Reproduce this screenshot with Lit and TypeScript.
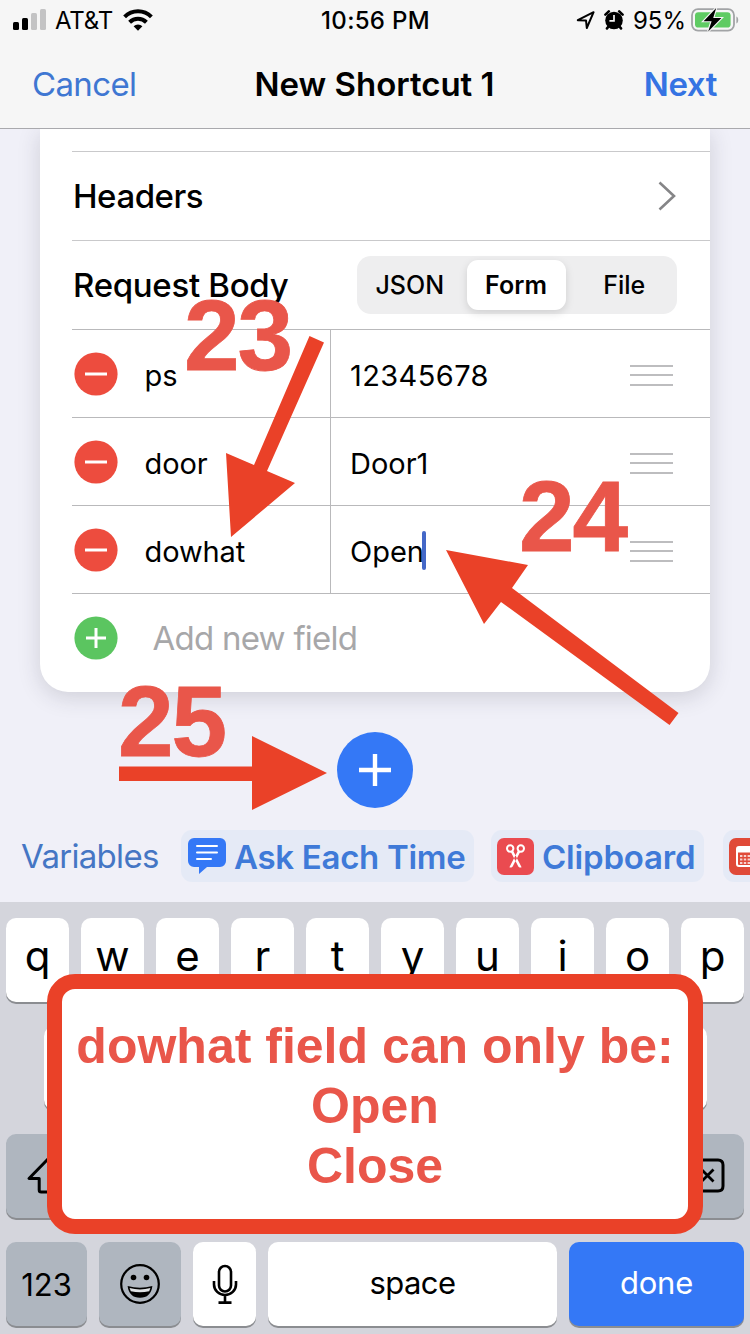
import { LitElement, html, css, svg } from "lit";
import { customElement } from "lit/decorators.js";
import { classMap } from "lit/directives/class-map.js";

const sans = css`Inter, "Liberation Sans", sans-serif`;

@customElement("status-bar")
class StatusBar extends LitElement {
  static styles = css`
    :host { display: grid; grid-template-columns: 1fr auto 1fr; height: 40px; align-items: center; box-sizing: border-box; padding: 0 11px 0 12px; font: 400 24px/40px ${sans}; color: #000; }
    .side { display: flex; align-items: center; }
    .right { justify-content: flex-end; }
    .signal { width: 35px; height: 22px; margin-right: 8px; }
    .carrier { padding-top: 2px; line-height: 38px; letter-spacing: -0.2px; }
    .wifi { margin-left: 10px; }
    .time { font-weight: 550; letter-spacing: 0.3px; padding-top: 2px; line-height: 38px; }
    .arrow { margin-right: 8px; }
    .alarm { margin-right: 9px; }
    .pct { padding-top: 2px; line-height: 38px; }
    .battery { margin-left: 5px; }
  `;
  render() {
    return html`
      <div class="side">
        <svg class="signal" viewBox="0 0 35 22">
          <rect x="1" y="13" width="6" height="8" rx="1.5" />
          <rect x="10" y="9" width="6" height="12" rx="1.5" />
          <rect x="19" y="4" width="6" height="17" rx="1.5" fill="#c3c3c4" />
          <rect x="28" y="0" width="6" height="21" rx="1.5" fill="#c3c3c4" />
        </svg>
        <span class="carrier">AT&amp;T</span>
        <svg class="wifi" width="30" height="22" viewBox="0 0 30 22">
          <g fill="none" stroke="#000" stroke-width="4">
            <path d="M1.6 7.8a19 19 0 0 1 26.8 0" />
            <path d="M6.6 13.2a12 12 0 0 1 16.8 0" />
          </g>
          <path d="M15 21.8l-4.4-4.6a6.4 6.4 0 0 1 8.8 0z" />
        </svg>
      </div>
      <span class="time">10:56 PM</span>
      <div class="side right">
        <svg class="arrow" width="20" height="20" viewBox="0 0 20 20">
          <path d="M1.8 10.2L17.6 2.2 10.8 18 10 10.4z" fill="none" stroke="#000" stroke-width="2" stroke-linejoin="round" />
        </svg>
        <svg class="alarm" width="20" height="20" viewBox="0 0 20 20">
          <circle cx="10" cy="10.5" r="8.8" />
          <path d="M1.4 4.6L4.8 1.4M18.600 4.600L15.200 1.400M3 18.400l2-2.400M17 18.400l-2-2.400" stroke="#000" stroke-width="2.6" stroke-linecap="round" />
          <path d="M10 5v5.800H5.400" fill="none" stroke="#f6f6f6" stroke-width="1.700" />
        </svg>
        <span class="pct">95%</span>
        <svg class="battery" width="48" height="24" viewBox="0 0 48 24">
          <rect x="1" y="1.2" width="42" height="21.4" rx="6" fill="none" stroke="#a2a4a6" stroke-width="1.8" />
          <rect x="4" y="4.2" width="35.6" height="15.4" rx="3.4" fill="#5fcb63" />
          <path d="M45.4 8.4c2.4.8 2.4 6.2 0 7z" fill="#a2a4a6" />
          <path d="M25.2 0L12.6 13.2h8l-3.4 10.2L30.4 10h-8.2z" stroke="#f6f6f6" stroke-width="2.2" paint-order="stroke" />
        </svg>
      </div>
    `;
  }
}

@customElement("nav-bar")
class NavBar extends LitElement {
  static styles = css`
    :host { display: grid; grid-template-columns: 1fr auto 1fr; height: 88px; align-items: center; padding: 0 33px 0 32px; font: 400 33px/40px ${sans}; box-sizing: border-box; }
    .cancel { color: #3f77d2; letter-spacing: -0.65px; }
    .title { font-weight: 600; letter-spacing: -0.02px; color: #000; }
    .next { font-weight: 600; color: #3573e3; justify-self: end; letter-spacing: -0.4px; }
  `;
  render() {
    return html`<span class="cancel">Cancel</span><span class="title">New Shortcut 1</span><span class="next">Next</span>`;
  }
}

@customElement("request-card")
class RequestCard extends LitElement {
  static styles = css`
    :host { display: block; margin: 0 40px; height: 563px; box-sizing: border-box; background: #fff; border-radius: 0 0 28px 28px; box-shadow: 0 5px 22px rgba(40, 40, 60, 0.17); padding: 22px 0 0 32px; font: 400 29px/36px ${sans}; color: #000; }
    .row { display: flex; align-items: center; box-sizing: border-box; border-top: 1px solid #c9c9cb; height: 89px; }
    .label { font-weight: 500; font-size: 33px; flex: 1; letter-spacing: -0.45px; padding-left: 1px; }
    .body-label { letter-spacing: -0.3px; }
    .chevron { margin-right: 33px; }
    .segments { display: flex; align-items: center; width: 320px; height: 58px; background: #eeeeef; border-radius: 14px; margin-right: 33px; font-size: 25px; font-weight: 500; }
    .seg { flex: 1; text-align: center; line-height: 50px; }
    .seg:first-child { padding-right: 4px; }
    .seg:last-child { padding-left: 6px; }
    .seg.on { background: #fff; flex: none; width: 99px; border-radius: 11px; font-weight: 600; box-shadow: 0 3px 8px rgba(0, 0, 0, 0.13); }
    .field { height: 88px; border-top-color: #b9b9bb; }
    .key { display: flex; align-items: center; width: 258px; height: 100%; border-right: 1px solid #b9b9bb; }
    .value { display: flex; align-items: center; flex: 1; padding: 4px 0 0 19px; }
    .digits { letter-spacing: 0.4px; }
    .name { padding: 4px 0 0 27px; letter-spacing: -0.1px; }
    .badge { margin-left: 1.5px; flex: none; }
    .caret { width: 4px; height: 39px; border-radius: 2px; background: #4468c8; margin: -2px 0 0 -2px; }
    .grip { display: grid; gap: 7.500px; width: 43px; margin: 3px 37px 0 0; }
    .bar { height: 2px; background: #bdbdbf; }
    .add { color: #a7a7a9; font-size: 33px; padding-left: 35px; letter-spacing: -0.75px; }
    .last { border-top-color: #b9b9bb; height: 89px; }
  `;
  private badge(add: boolean) {
    return html`<svg class="badge" width="44" height="44" viewBox="0 0 44 44">
      <circle cx="22" cy="22" r="21.6" fill=${add ? "#5bc560" : "#ed4c3e"} />
      <path d=${add ? "M12 22h20M22 12v20" : "M11 22h22"} stroke="#fff" stroke-width="3" />
    </svg>`;
  }
  render() {
    const fields = [["ps", "12345678"], ["door", "Door1"], ["dowhat", "Open"]];
    return html`
      <div class="row">
        <span class="label">Headers</span>
        <svg class="chevron" width="20" height="32" viewBox="0 0 20 32"><path d="M2.5 2.500L17 16 2.500 29.500" fill="none" stroke="#858587" stroke-width="2.6" /></svg>
      </div>
      <div class="row">
        <span class="label body-label">Request Body</span>
        <div class="segments">
          ${["JSON", "Form", "File"].map((t) => html`<span class=${classMap({ seg: true, on: t === "Form" })}>${t}</span>`)}
        </div>
      </div>
      ${fields.map(([k, v], i) => html`
        <div class="row field">
          <div class="key">${this.badge(false)}<span class="name">${k}</span></div>
          <div class=${classMap({ value: true, digits: i === 0 })}>${v}${i === 2 ? html`<span class="caret"></span>` : ""}</div>
          <div class="grip"><div class="bar"></div><div class="bar"></div><div class="bar"></div></div>
        </div>`)}
      <div class="row last">${this.badge(true)}<span class="add">Add new field</span></div>
    `;
  }
}

@customElement("variable-bar")
class VariableBar extends LitElement {
  static styles = css`
    :host { display: flex; align-items: center; height: 52px; font: 600 33px/52px ${sans}; color: #3f7ad8; overflow: hidden; white-space: nowrap; }
    .vars { font-weight: 400; width: 160px; padding-left: 21px; color: #4576c4; flex: none; letter-spacing: -0.7px; }
    .chip { display: flex; align-items: center; box-sizing: border-box; height: 52px; border-radius: 11px; background: #e5eaf6; flex: none; padding-left: 6px; }
    .ask { width: 293px; margin-right: 17px; letter-spacing: -0.3px; }
    .clip { width: 213px; margin-right: 19px; letter-spacing: -0.2px; }
    .date { width: 60px; }
    .t { margin-left: 7px; padding-top: 1px; }
    .clip .t { margin-left: 8px; }
  `;
  render() {
    return html`
      <span class="vars">Variables</span>
      <div class="chip ask">
        <svg width="40" height="38" viewBox="0 0 40 38">
          <path d="M7 1h26a6 6 0 0 1 6 6v17a6 6 0 0 1-6 6H20l-8 7v-7H7a6 6 0 0 1-6-6V7a6 6 0 0 1 6-6z" fill="#3478f6" />
          <path d="M10 9h20M10 15.500h20M10 22h14" stroke="#fff" stroke-width="2" stroke-linecap="round" />
        </svg>
        <span class="t">Ask Each Time</span>
      </div>
      <div class="chip clip">
        <svg width="37" height="37" viewBox="0 0 37 37">
          <rect width="37" height="37" rx="7" fill="#ea4b50" />
          <g fill="none" stroke="#fff" stroke-width="2">
            <circle cx="13.200" cy="10.500" r="3.200" /><circle cx="23.800" cy="10.500" r="3.200" />
          </g>
          <path d="M13.600 13.400l2.400-1 8.600 16.800c-1.800.6-3 0-3.800-1.800zM23.400 13.400l-2.400-1-8.600 16.800c1.800.6 3 0 3.800-1.800z" fill="#fff" />
        </svg>
        <span class="t">Clipboard</span>
      </div>
      <div class="chip date">
        <svg width="37" height="37" viewBox="0 0 37 37">
          <rect width="37" height="37" rx="7" fill="#e04a38" />
          <path d="M10 9h17a2 2 0 0 1 2 2v15a2 2 0 0 1-2 2H10a2 2 0 0 1-2-2V11a2 2 0 0 1 2-2z" fill="none" stroke="#fff" stroke-width="2" />
          <path d="M8 10h21v4.500H8z" fill="#fff" />
          <path d="M11 18h16M11 21.500h16M11 25h16" stroke="#fff" stroke-width="2.200" stroke-dasharray="2.400 1.400" opacity=".75" />
        </svg>
      </div>
    `;
  }
}

@customElement("soft-keyboard")
class SoftKeyboard extends LitElement {
  static styles = css`
    :host { display: grid; grid-template-rows: repeat(4, 84px); row-gap: 24px; box-sizing: border-box; height: 432px; padding: 16px 6px 0; background: #d4d5dc; font: 400 42px/76px ${sans}; color: #000; }
    .row { display: flex; gap: 12px; justify-content: center; }
    .key { display: flex; justify-content: center; width: 63px; height: 84px; border-radius: 10px; background: #fff; box-shadow: 0 2px 0 #8b8d91; flex: none; }
    .letter { font-weight: 370; }
    .dark { background: #afb6bf; }
    .shift { width: 84px; margin-right: 17px; align-items: center; }
    .del { width: 84px; margin-left: 16px; align-items: center; }
    .num { width: 81px; font-size: 31px; line-height: 86px; letter-spacing: -0.1px; }
    .emoji { width: 82px; align-items: center; }
    .mic { align-items: center; }
    .space { width: 289px; font-size: 31px; line-height: 82px; letter-spacing: -0.6px; }
    .done { width: 175px; font-size: 31px; line-height: 82px; background: #3478f6; color: #fff; letter-spacing: -0.2px; }
  `;
  private keys(labels: string[]) {
    return labels.map((c) => html`<div class="key letter">${c}</div>`);
  }
  render() {
    return html`
      <div class="row">${this.keys([..."qwertyuiop"])}</div>
      <div class="row">${this.keys(Array(9).fill(""))}</div>
      <div class="row">
        <div class="key dark shift"><svg width="44" height="40" viewBox="0 0 44 40"><path d="M22 3L3 22.5h10.2V34q0 2 2 2h13.6q2 0 2-2V22.500H41z" fill="none" stroke="#000" stroke-width="3" stroke-linejoin="round" /></svg></div>
        ${this.keys(Array(7).fill(""))}
        <div class="key dark del"><svg width="46" height="38" viewBox="0 0 46 38"><path d="M15 3h24q5 0 5 5v21q0 5-5 5H15L2 18.500z" fill="none" stroke="#000" stroke-width="3" stroke-linejoin="round" /><path d="M22.500 12.500l12 12M34.500 12.500l-12 12" stroke="#000" stroke-width="2.800" /></svg></div>
      </div>
      <div class="row">
        <div class="key dark num">123</div>
        <div class="key dark emoji"><svg width="40" height="40" viewBox="0 0 40 40"><circle cx="20" cy="20" r="18.800" fill="none" stroke="#000" stroke-width="2.200" /><circle cx="13.500" cy="13.500" r="2.800" /><circle cx="26.500" cy="13.500" r="2.800" /><path d="M7.600 22q12.400 3.600 24.800 0-1.600 11.800-12.400 11.800T7.600 22z" /><path d="M9.600 24q10.400 2.800 20.800 0l-1.200 3.200q-9.200 2-18.400 0z" fill="#dfe2e5" /></svg></div>
        <div class="key mic"><svg width="26" height="42" viewBox="0 0 26 42"><g fill="none" stroke="#000" stroke-width="2.600"><rect x="7" y="3" width="12" height="25.500" rx="6" /><path d="M2 18v3.500a11 10.500 0 0 0 22 0V18M13 32v8M6.500 39.600h13" /></g></svg></div>
        <div class="key space">space</div>
        <div class="key done">done</div>
      </div>
    `;
  }
}

@customElement("annotation-layer")
class AnnotationLayer extends LitElement {
  static styles = css`
    :host { position: absolute; inset: 0; font-family: "Liberation Sans", Arial, sans-serif; font-weight: 700; color: #e9564a; }
    .arrows { position: absolute; inset: 0; }
    .num { position: absolute; font-size: 100px; line-height: 100px; letter-spacing: -2px; -webkit-text-stroke: 0.800px #e9564a; }
    .n23 { left: 184px; top: 285px; }
    .n24 { left: 519px; top: 466px; }
    .n25 { left: 118px; top: 671px; }
    .note { position: absolute; left: 47px; top: 974px; width: 656px; height: 260px; box-sizing: border-box; border: 15px solid #ea4128; border-radius: 28px; background: #fff; font-size: 50px; line-height: 60px; text-align: center; padding-top: 27px; white-space: nowrap; }
    .inner { margin: 0 -10px; }
  `;
  render() {
    const arrows = [
      "M309.500 336L324 342.500 267 471 295 483 231 537 226 453 254 465z",
      "M446 550L528 565 512 588 678.500 713 669.500 725 501 602 484 624z",
      "M119 766.500H252V736L327 773 252 810V781H119z",
    ];
    return html`
      <span class="num n23">23</span>
      <span class="num n24">24</span>
      <span class="num n25">25</span>
      <svg class="arrows" width="750" height="1334" viewBox="0 0 750 1334" fill="#ea4128">${arrows.map((d) => svg`<path d=${d} />`)}</svg>
      <div class="note"><div class="inner">dowhat field can only be:</div><div>Open</div><div>Close</div></div>
    `;
  }
}

@customElement("app-root")
class AppRoot extends LitElement {
  static styles = css`
    :host { display: block; position: relative; width: 750px; height: 1334px; overflow: hidden; background: #f0f0f8; }
    .top { position: relative; background: #f6f6f6; border-bottom: 1px solid #a9a9ad; }
    .stage { height: 701px; overflow: hidden; }
    .plus { display: block; margin: 40px auto 0; }
    .bottom { display: flex; flex-direction: column; gap: 20px; }
    .flow { display: flex; flex-direction: column; }
  `;
  render() {
    return html`
      <div class="flow">
        <div class="top"><status-bar></status-bar><nav-bar></nav-bar></div>
        <div class="stage">
          <request-card></request-card>
          <svg class="plus" width="76" height="76" viewBox="0 0 76 76"><circle cx="38" cy="38" r="38" fill="#3478f6" /><path d="M22 38h32M38 22v32" stroke="#fff" stroke-width="4.400" /></svg>
        </div>
        <div class="bottom"><variable-bar></variable-bar><soft-keyboard></soft-keyboard></div>
      </div>
      <annotation-layer></annotation-layer>
    `;
  }
}
